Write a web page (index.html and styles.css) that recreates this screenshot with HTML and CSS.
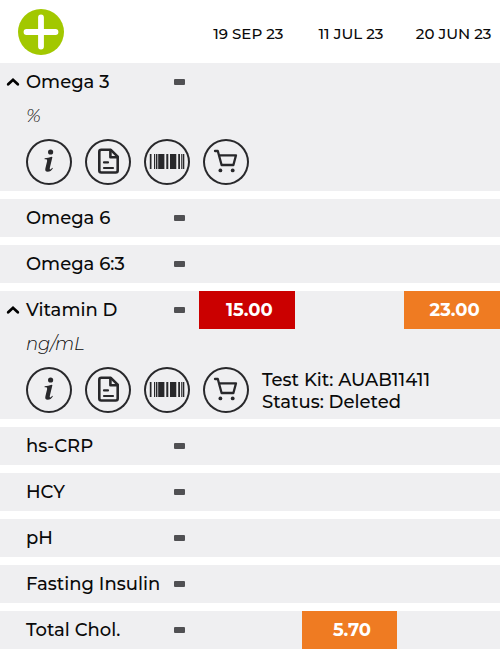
FILE: index.html
```html
<!DOCTYPE html>
<html lang="en">
<head>
<meta charset="utf-8">
<meta name="viewport" content="width=device-width, initial-scale=1">
<title>Test results</title>
<link rel="stylesheet" href="styles.css">
</head>
<body>
<svg class="sprite" aria-hidden="true">
  <symbol id="chevron" viewBox="0 0 14 10"><path d="M2.2 7.2 L7 2.8 L11.8 7.2" fill="none" stroke="#000" stroke-width="2.8" stroke-linecap="round" stroke-linejoin="miter"/></symbol>
  <symbol id="info" viewBox="0 0 46 46">
    <circle cx="24.6" cy="13" r="2.6"/>
    <path d="M18.6 19.2 Q22.2 19.2 25.8 17.8 L26.4 18.2 L23.9 28.5 Q23.4 30.7 24.2 30.6 Q25.1 30.4 26.2 28.8 L26.9 29.3 Q24.9 32.8 21.7 32.8 Q18.6 32.8 19.4 29.3 L21.1 22.3 Q21.5 20.4 20.1 20.3 L18.6 20.2 Z"/>
  </symbol>
  <symbol id="document" viewBox="0 0 46 46">
    <g fill="none" stroke="#28282b" stroke-width="2.6" stroke-linejoin="round" stroke-linecap="round">
      <path d="M16.3 10.8 H25.8 L32.7 17.7 V31.5 Q32.7 33.5 30.7 33.5 H16.3 Q14.3 33.5 14.3 31.5 V12.8 Q14.3 10.8 16.3 10.8 Z"/>
      <path d="M25.4 11.2 V18.2 H32.4"/>
      <path d="M19 23.4 H23 M19 29 H28" stroke-width="2.2"/>
    </g>
  </symbol>
  <symbol id="barcode" viewBox="0 0 46 46">
    <path d="M5.8 15h1.7v15h-1.7z M10 15h1.2v15h-1.2z M12 15h1.4v15h-1.4z M14.2 15h6.2v15h-6.2z M22.3 15h2v15h-2z M26 15h6.3v15h-6.3z M34.2 15h1.8v15h-1.8z M37.2 15h1.2v15h-1.2z M39 15h1.3v15h-1.3z"/>
  </symbol>
  <symbol id="cart" viewBox="0 0 46 46">
    <path d="M12 12 H14.8 L18.6 26 H30.4 L33 16.3 H16" fill="none" stroke="#28282b" stroke-width="2.3" stroke-linecap="round" stroke-linejoin="round"/>
    <circle cx="17.4" cy="31.4" r="1.9"/><circle cx="29.7" cy="31.4" r="1.9"/>
  </symbol>
</svg>
<table class="results">
  <colgroup><col class="name-col"><col><col><col></colgroup>
  <thead>
    <tr>
      <td class="add-cell"><button class="add" type="button" aria-label="Add"><svg viewBox="0 0 46 46"><path d="M23 8.5 V37.5 M8.5 23 H37.5" stroke="#fff" stroke-width="5.8" stroke-linecap="round"/></svg></button></td>
      <th scope="col">19 SEP 23</th><th scope="col">11 JUL 23</th><th scope="col">20 JUN 23</th>
    </tr>
  </thead>
  <tbody>
    <tr class="row">
      <th scope="row"><div class="name"><button class="toggle" type="button" aria-label="Collapse Omega 3"><svg><use href="#chevron"/></svg></button><span class="label">Omega 3</span><i class="dash"></i></div></th>
      <td></td><td></td><td></td>
    </tr>
    <tr class="details">
      <td colspan="4">
        <div class="unit">%</div>
        <div class="actions">
          <button type="button" aria-label="Information"><svg><use href="#info"/></svg></button>
          <button type="button" aria-label="Report"><svg><use href="#document"/></svg></button>
          <button type="button" aria-label="Barcode"><svg><use href="#barcode"/></svg></button>
          <button type="button" aria-label="Buy"><svg><use href="#cart"/></svg></button>
        </div>
      </td>
    </tr>
  </tbody>
  <tbody>
    <tr class="row"><th scope="row"><div class="name"><span class="label">Omega 6</span><i class="dash"></i></div></th><td></td><td></td><td></td></tr>
  </tbody>
  <tbody>
    <tr class="row"><th scope="row"><div class="name"><span class="label">Omega 6:3</span><i class="dash"></i></div></th><td></td><td></td><td></td></tr>
  </tbody>
  <tbody>
    <tr class="row">
      <th scope="row"><div class="name"><button class="toggle" type="button" aria-label="Collapse Vitamin D"><svg><use href="#chevron"/></svg></button><span class="label">Vitamin D</span><i class="dash"></i></div></th>
      <td><div class="value high">15.00</div></td><td></td><td><div class="value medium">23.00</div></td>
    </tr>
    <tr class="details">
      <td colspan="4">
        <div class="unit">ng/mL</div>
        <div class="actions">
          <button type="button" aria-label="Information"><svg><use href="#info"/></svg></button>
          <button type="button" aria-label="Report"><svg><use href="#document"/></svg></button>
          <button type="button" aria-label="Barcode"><svg><use href="#barcode"/></svg></button>
          <button type="button" aria-label="Buy"><svg><use href="#cart"/></svg></button>
          <div class="kit">Test Kit: AUAB11411<br>Status: Deleted</div>
        </div>
      </td>
    </tr>
  </tbody>
  <tbody>
    <tr class="row"><th scope="row"><div class="name"><span class="label">hs-CRP</span><i class="dash"></i></div></th><td></td><td></td><td></td></tr>
  </tbody>
  <tbody>
    <tr class="row"><th scope="row"><div class="name"><span class="label">HCY</span><i class="dash"></i></div></th><td></td><td></td><td></td></tr>
  </tbody>
  <tbody>
    <tr class="row"><th scope="row"><div class="name"><span class="label">pH</span><i class="dash"></i></div></th><td></td><td></td><td></td></tr>
  </tbody>
  <tbody>
    <tr class="row"><th scope="row"><div class="name"><span class="label">Fasting Insulin</span><i class="dash"></i></div></th><td></td><td></td><td></td></tr>
  </tbody>
  <tbody>
    <tr class="row"><th scope="row"><div class="name"><span class="label">Total Chol.</span><i class="dash"></i></div></th><td></td><td><div class="value medium">5.70</div></td><td></td></tr>
  </tbody>
</table>
</body>
</html>
```
FILE: styles.css
```css
* { box-sizing: border-box; }

body {
  margin: 0;
  background: #fff;
  color: #0a0a0a;
  font-family: Montserrat, Inter, "Liberation Sans", sans-serif;
  font-size: 18px;
  font-weight: 500;
  line-height: 22px;
}

button {
  padding: 0;
  border: 0;
  background: none;
  cursor: pointer;
}

svg { display: block; }
.sprite { display: none; }

.results {
  width: 100%;
  table-layout: fixed;
  border-collapse: separate;
  border-spacing: 0;
}

.name-col { width: 192px; }

th, td {
  padding: 0;
  font-weight: 500;
  text-align: left;
}

thead td, thead th { height: 63px; }

thead th {
  padding: 4px 0 0 10px;
  font-size: 15px;
  text-align: center;
  white-space: nowrap;
}

.add-cell { padding-left: 18px; }

.add {
  display: block;
  width: 46px;
  height: 46px;
  border-radius: 50%;
  background: #a2c800;
}

tbody th, tbody td { background: #efeff1; }

tbody + tbody .row > * { border-top: 8px solid #fff; }

.row td { padding-left: 7px; }

.name {
  display: flex;
  align-items: center;
  height: 38px;
  padding: 0 7px 0 26px;
  white-space: nowrap;
}

.toggle { margin-left: -20px; margin-right: 6px; }
.toggle svg { width: 14px; height: 10px; }
.label { flex: 1; }

.dash {
  width: 11px;
  height: 6px;
  border-radius: 1px;
  background: #505053;
}

.value {
  height: 38px;
  padding-left: 5px;
  color: #fff;
  font-weight: 700;
  line-height: 38px;
  text-align: center;
}

.high { background: #cb0000; }
.medium { background: #ef7b22; }

.details td { padding: 4px 0 6px 26px; }

.unit {
  margin-bottom: 12px;
  font-style: italic;
  font-weight: 300;
}

.actions {
  display: flex;
  align-items: center;
  gap: 13px;
}

.actions button {
  width: 46px;
  height: 46px;
  border-radius: 50%;
  box-shadow: inset 0 0 0 2px #28282b;
}

.actions svg {
  width: 46px;
  height: 46px;
  fill: #28282b;
}

.kit {
  padding-top: 2px;
  white-space: nowrap;
}
```
